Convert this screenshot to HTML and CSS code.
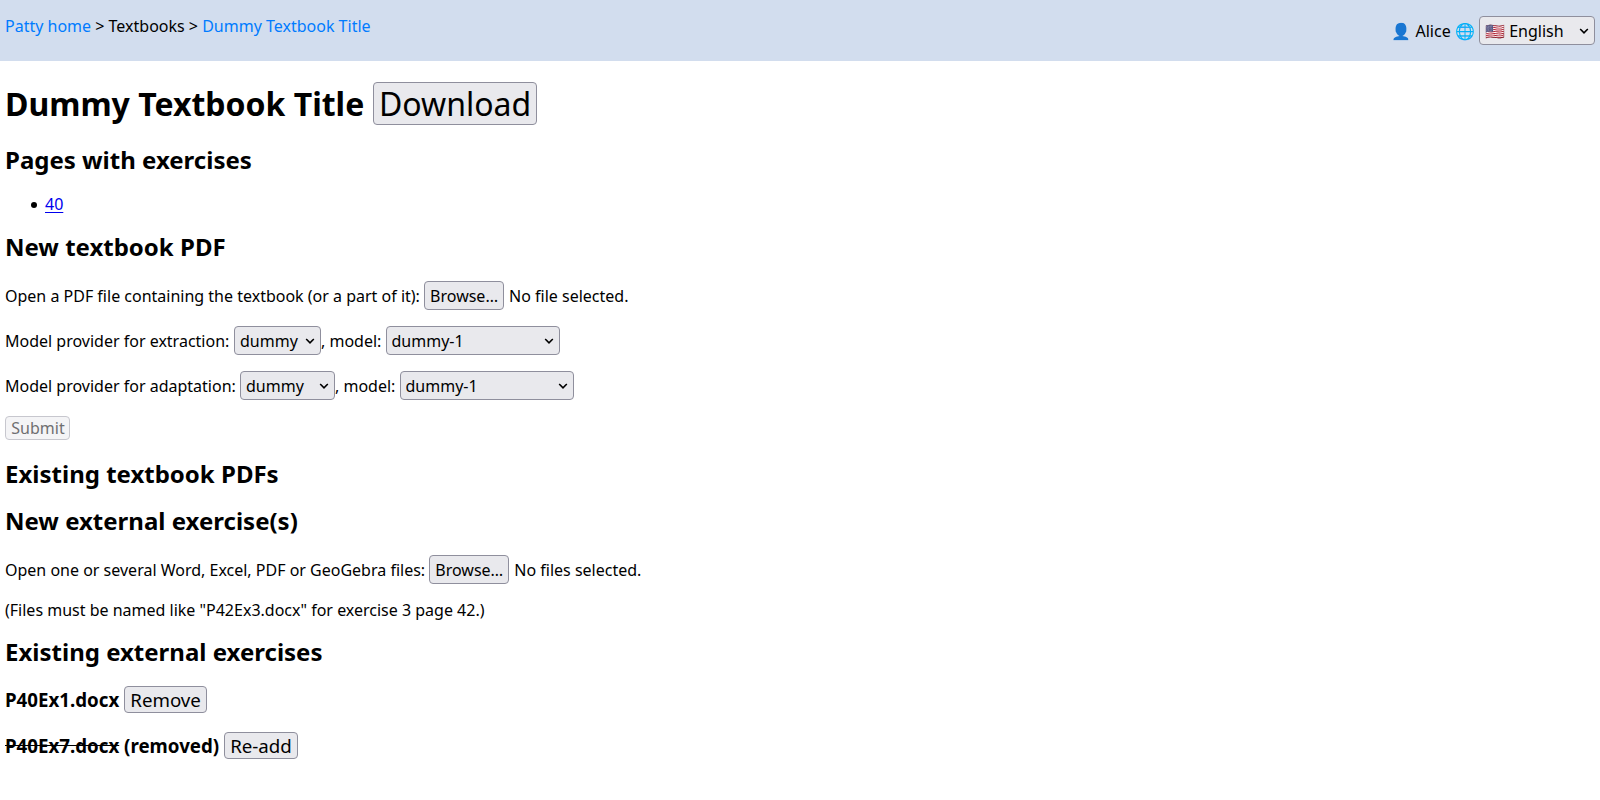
FILE: index.html
```html
<!DOCTYPE html>
<html lang="en">
<head>
<meta charset="utf-8">
<title>Dummy Textbook Title</title>
<link rel="stylesheet" href="styles.css">
</head>
<body>
<header class="topbar">
  <nav class="crumbs"><a href="#">Patty home</a> &gt; Textbooks &gt; <a href="#">Dummy Textbook Title</a></nav>
  <div class="user">👤 Alice 🌐 <select class="select language"><option>🇺🇸 English</option></select></div>
</header>
<main class="content">
  <h1 class="title">Dummy Textbook Title <button class="button download">Download</button></h1>

  <h2 class="section">Pages with exercises</h2>
  <ul class="pages"><li><a href="#">40</a></li></ul>

  <h2 class="section after-pages">New textbook PDF</h2>
  <p class="row">Open a PDF file containing the textbook (or a part of it): <button class="button browse">Browse…</button><span class="file-status">No file selected.</span></p>
  <p class="row">Model provider for extraction: <select class="select provider"><option>dummy</option></select>, model: <select class="select model"><option>dummy-1</option></select></p>
  <p class="row">Model provider for adaptation: <select class="select provider-wide"><option>dummy</option></select>, model: <select class="select model"><option>dummy-1</option></select></p>
  <p class="row submit-row"><button class="button submit" disabled>Submit</button></p>

  <h2 class="section after-form">Existing textbook PDFs</h2>
  <h2 class="section stacked">New external exercise(s)</h2>
  <p class="row after-stacked">Open one or several Word, Excel, PDF or GeoGebra files: <button class="button browse">Browse…</button><span class="file-status">No files selected.</span></p>
  <p class="note">(Files must be named like "P42Ex3.docx" for exercise 3 page 42.)</p>

  <h2 class="section after-note">Existing external exercises</h2>
  <h3 class="exercise">P40Ex1.docx <button class="button remove">Remove</button></h3>
  <h3 class="exercise"><del>P40Ex7.docx</del> (removed) <button class="button readd">Re-add</button></h3>
</main>
</body>
</html>
```
FILE: styles.css
```css
* { box-sizing: border-box; }

body {
  margin: 0;
  background: #fff;
  color: #000;
  font: 16px/18px "Noto Sans", sans-serif;
}

.topbar {
  display: flex;
  justify-content: space-between;
  align-items: flex-start;
  height: 61px;
  padding: 16px 5px;
  background: #d2ddee;
}
.crumbs { line-height: 20px; }
.crumbs a { color: #007bff; text-decoration: none; }
.user { height: 29px; line-height: 31px; white-space: nowrap; }

.content { padding: 21px 5px 0; }

.title { height: 43px; margin: 0 0 21px; font-size: 32px; line-height: 43px; }
.section { height: 28px; margin: 20px 0 21px; font-size: 24px; line-height: 28px; }
.section.after-pages { margin: 20px 0; }
.section.after-note { margin-top: 19px; }
.section.after-form { margin-bottom: 19px; }
.section.stacked { margin: 19px 0 20px; }

.pages { height: 18px; margin: 0 0 19px; padding-left: 40px; list-style: none; }
.pages li::before {
  content: "";
  float: left;
  width: 6px;
  height: 6px;
  margin: 7px 8px 0 -14px;
  border-radius: 50%;
  background: #000;
}
.pages a { color: #0000ee; text-underline-offset: 2px; }

.row { height: 29px; margin: 0 0 16px; line-height: 31px; white-space: nowrap; }
.submit-row { height: 24px; margin-bottom: 20px; line-height: 24px; }
.row.after-stacked { margin-bottom: 17px; }
.note { height: 18px; margin: 0; }

.exercise { height: 27px; margin: 0 0 19px; font-size: 18.72px; line-height: 27px; }
.section + .exercise { margin-top: -1px; }

.button,
.select {
  margin: 0;
  padding: 0 5px;
  border: 1px solid #8f8f9d;
  border-radius: 4px;
  background-color: #e9e9ed;
  color: #000;
  font: inherit;
  font-weight: 400;
  vertical-align: top;
}
.button { padding: 0; text-align: center; }
.select {
  height: 29px;
  padding-top: 2px;
  line-height: 25px;
  appearance: none;
  background-image: url("data:image/svg+xml,%3Csvg xmlns='http://www.w3.org/2000/svg' width='10' height='6'%3E%3Cpath d='M1.2 1l3.8 3.8L8.8 1' fill='none' stroke='%23000' stroke-width='1.6'/%3E%3C/svg%3E");
  background-repeat: no-repeat;
  background-position: right 5px center;
}

.language { width: 116px; }
.provider { width: 87px; margin-left: 0.5px; }
.provider-wide { width: 95px; }
.model { width: 174px; }

.download { width: 164px; height: 43px; padding-left: 1px; line-height: 41px; }
.browse { width: 80px; height: 29px; padding-top: 2px; line-height: 25px; }
.submit { width: 65px; height: 24px; padding-left: 1px; line-height: 22px; }
.remove { width: 83px; height: 27px; line-height: 25px; }
.readd { width: 74px; height: 27px; line-height: 25px; }
.submit:disabled { border-color: #c7c7ce; background-color: #f4f4f6; color: #6f6f71; }
.file-status { margin-left: 5px; }
```
